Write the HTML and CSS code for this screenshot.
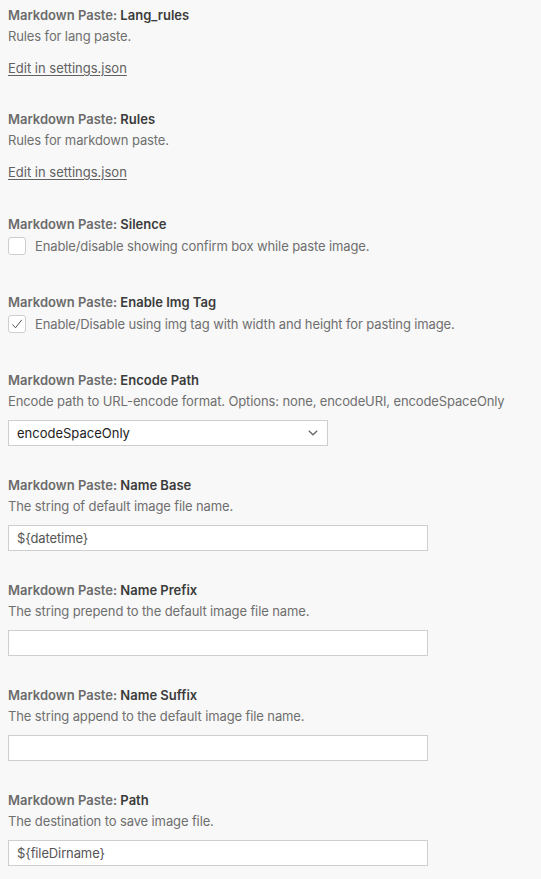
FILE: index.html
```html
<!DOCTYPE html>
<html>
<head>
<meta charset="utf-8">
<link rel="stylesheet" href="styles.css">
</head>
<body>
<div class="settings">
  <div class="item item-link">
    <div class="title"><span class="cat">Markdown Paste: </span><span class="name">Lang_rules</span></div>
    <div class="desc">Rules for lang paste.</div>
    <a class="edit" href="#">Edit in settings.json</a>
  </div>
  <div class="item item-link">
    <div class="title"><span class="cat">Markdown Paste: </span><span class="name">Rules</span></div>
    <div class="desc">Rules for markdown paste.</div>
    <a class="edit" href="#">Edit in settings.json</a>
  </div>
  <div class="item item-check">
    <div class="title"><span class="cat">Markdown Paste: </span><span class="name">Silence</span></div>
    <div class="check-row">
      <span class="checkbox"></span>
      <span class="check-label">Enable/disable showing confirm box while paste image.</span>
    </div>
  </div>
  <div class="item item-check">
    <div class="title"><span class="cat">Markdown Paste: </span><span class="name">Enable Img Tag</span></div>
    <div class="check-row">
      <span class="checkbox"><svg width="12" height="12" viewBox="0 0 12 12"><path d="M1.5 6.5 L4.5 9.8 L10.8 1.8" fill="none" stroke="#555" stroke-width="1" /></svg></span>
      <span class="check-label">Enable/Disable using img tag with width and height for pasting image.</span>
    </div>
  </div>
  <div class="item">
    <div class="title"><span class="cat">Markdown Paste: </span><span class="name">Encode Path</span></div>
    <div class="desc">Encode path to URL-encode format. Options: none, encodeURI, encodeSpaceOnly</div>
    <div class="select">
      <span class="select-text">encodeSpaceOnly</span>
      <svg class="chev" width="10" height="6" viewBox="0 0 10 6"><path d="M0.8 0.8 L5 4.8 L9.2 0.8" fill="none" stroke="#666" stroke-width="1.2"/></svg>
    </div>
  </div>
  <div class="item">
    <div class="title"><span class="cat">Markdown Paste: </span><span class="name">Name Base</span></div>
    <div class="desc">The string of default image file name.</div>
    <div class="input">${datetime}</div>
  </div>
  <div class="item">
    <div class="title"><span class="cat">Markdown Paste: </span><span class="name">Name Prefix</span></div>
    <div class="desc">The string prepend to the default image file name.</div>
    <div class="input"></div>
  </div>
  <div class="item">
    <div class="title"><span class="cat">Markdown Paste: </span><span class="name">Name Suffix</span></div>
    <div class="desc">The string append to the default image file name.</div>
    <div class="input"></div>
  </div>
  <div class="item">
    <div class="title"><span class="cat">Markdown Paste: </span><span class="name">Path</span></div>
    <div class="desc">The destination to save image file.</div>
    <div class="input">${fileDirname}</div>
  </div>
</div>
</body>
</html>
```
FILE: styles.css
```css
html, body {
  margin: 0;
  padding: 0;
  background: #f8f8f8;
}
body {
  font-family: Inter, "Noto Sans", "Liberation Sans", sans-serif;
  font-size: 13px;
  letter-spacing: -0.12px;
  color: #6f6f6f;
}
.settings {
  padding: 0 8px;
}
.item {
  display: flex;
  flex-direction: column;
  align-items: flex-start;
  padding: 5px 0 24px;
}
.item-link {
  padding-bottom: 26px;
}
.item-link + .item-link {
  padding-bottom: 27px;
}
.item-check {
  padding-bottom: 32px;
}
.title {
  line-height: 20px;
  height: 20px;
  letter-spacing: 0;
}
.cat {
  font-weight: 600;
  color: #6b6b6b;
}
.name {
  font-weight: 600;
  color: #3b3b3b;
}
.desc {
  margin-top: 1px;
  line-height: 20px;
  color: #6f6f6f;
}
.edit {
  margin-top: 12px;
  line-height: 20px;
  letter-spacing: 0;
  color: #616161;
  text-decoration: underline;
  text-underline-offset: 2px;
}
.check-row {
  margin-top: 3px;
  display: flex;
  align-items: center;
  gap: 9px;
}
.checkbox {
  box-sizing: border-box;
  width: 18px;
  height: 18px;
  background: #fff;
  border: 1px solid #cecece;
  border-radius: 3px;
  display: flex;
  align-items: center;
  justify-content: center;
}
.check-label {
  line-height: 18px;
  color: #6f6f6f;
}
.select {
  margin-top: 9px;
  box-sizing: border-box;
  width: 320px;
  height: 26px;
  background: #fff;
  border: 1px solid #cecece;
  display: flex;
  align-items: center;
  justify-content: space-between;
  padding: 0 9px 0 8px;
}
.select-text {
  color: #222;
  letter-spacing: 0;
}
.input {
  margin-top: 9px;
  box-sizing: border-box;
  width: 420px;
  height: 26px;
  background: #fff;
  border: 1px solid #cecece;
  padding: 0 8px;
  line-height: 24px;
  color: #555;
}
```
